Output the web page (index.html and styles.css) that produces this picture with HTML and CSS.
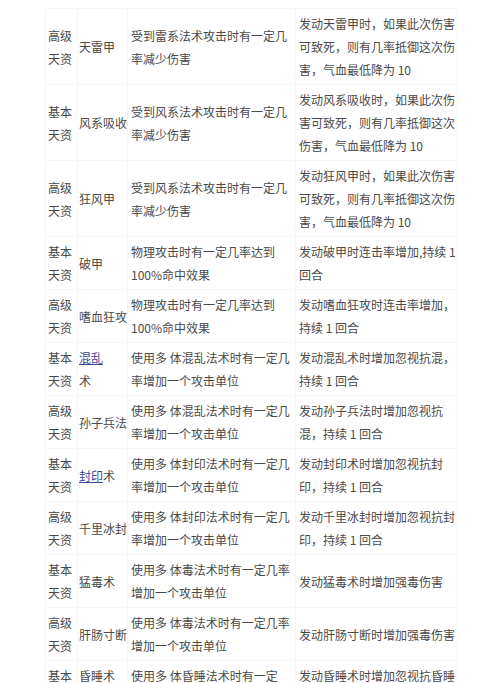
FILE: index.html
```html
<!DOCTYPE html>
<html lang="zh-CN">
<head>
<meta charset="utf-8">
<title>天资</title>
<link rel="stylesheet" href="styles.css">
</head>
<body>
<div class="page">
  <table class="talents">
    <colgroup>
      <col class="c-kind">
      <col class="c-name">
      <col class="c-desc">
      <col class="c-effect">
    </colgroup>
    <tbody>
      <tr>
        <td class="kind">高级<br>天资</td>
        <td class="name">天雷甲</td>
        <td class="desc">受到雷系法术攻击时有一定几<br>率减少伤害</td>
        <td class="effect">发动天雷甲时，如果此次伤害<br>可致死，则有几率抵御这次伤<br>害，气血最低降为 10</td>
      </tr>
      <tr>
        <td class="kind">基本<br>天资</td>
        <td class="name">风系吸收</td>
        <td class="desc">受到风系法术攻击时有一定几<br>率减少伤害</td>
        <td class="effect">发动风系吸收时，如果此次伤<br>害可致死，则有几率抵御这次<br>伤害，气血最低降为 10</td>
      </tr>
      <tr>
        <td class="kind">高级<br>天资</td>
        <td class="name">狂风甲</td>
        <td class="desc">受到风系法术攻击时有一定几<br>率减少伤害</td>
        <td class="effect">发动狂风甲时，如果此次伤害<br>可致死，则有几率抵御这次伤<br>害，气血最低降为 10</td>
      </tr>
      <tr>
        <td class="kind">基本<br>天资</td>
        <td class="name">破甲</td>
        <td class="desc">物理攻击时有一定几率达到<br>100%命中效果</td>
        <td class="effect">发动破甲时连击率增加,持续 1<br>回合</td>
      </tr>
      <tr>
        <td class="kind">高级<br>天资</td>
        <td class="name">嗜血狂攻</td>
        <td class="desc">物理攻击时有一定几率达到<br>100%命中效果</td>
        <td class="effect">发动嗜血狂攻时连击率增加，<br>持续 1 回合</td>
      </tr>
      <tr>
        <td class="kind">基本<br>天资</td>
        <td class="name"><a href="#">混乱</a><br>术</td>
        <td class="desc">使用多 体混乱法术时有一定几<br>率增加一个攻击单位</td>
        <td class="effect">发动混乱术时增加忽视抗混，<br>持续 1 回合</td>
      </tr>
      <tr>
        <td class="kind">高级<br>天资</td>
        <td class="name">孙子兵法</td>
        <td class="desc">使用多 体混乱法术时有一定几<br>率增加一个攻击单位</td>
        <td class="effect">发动孙子兵法时增加忽视抗<br>混，持续 1 回合</td>
      </tr>
      <tr>
        <td class="kind">基本<br>天资</td>
        <td class="name"><a href="#">封印</a>术</td>
        <td class="desc">使用多 体封印法术时有一定几<br>率增加一个攻击单位</td>
        <td class="effect">发动封印术时增加忽视抗封<br>印，持续 1 回合</td>
      </tr>
      <tr>
        <td class="kind">高级<br>天资</td>
        <td class="name">千里冰封</td>
        <td class="desc">使用多 体封印法术时有一定几<br>率增加一个攻击单位</td>
        <td class="effect">发动千里冰封时增加忽视抗封<br>印，持续 1 回合</td>
      </tr>
      <tr>
        <td class="kind">基本<br>天资</td>
        <td class="name">猛毒术</td>
        <td class="desc">使用多 体毒法术时有一定几率<br>增加一个攻击单位</td>
        <td class="effect">发动猛毒术时增加强毒伤害</td>
      </tr>
      <tr>
        <td class="kind">高级<br>天资</td>
        <td class="name">肝肠寸断</td>
        <td class="desc">使用多 体毒法术时有一定几率<br>增加一个攻击单位</td>
        <td class="effect">发动肝肠寸断时增加强毒伤害</td>
      </tr>
      <tr>
        <td class="kind">基本<br>天资</td>
        <td class="name">昏睡术<br>&nbsp;</td>
        <td class="desc">使用多 体昏睡法术时有一定<br>几率增加一个攻击单位</td>
        <td class="effect">发动昏睡术时增加忽视抗昏睡<br>，持续 1 回合</td>
      </tr>
    </tbody>
  </table>
</div>
</body>
</html>
```

FILE: styles.css
```css
html, body {
  margin: 0;
  background: #ffffff;
}

body {
  font-family: "Noto Sans CJK SC", "Noto Sans", sans-serif;
  font-size: 12px;
  color: #4a4a4a;
}

.page {
  padding: 8px 0 0 45px;
}

.talents {
  border-collapse: collapse;
  table-layout: fixed;
  width: 412px;
}

.c-kind { width: 32px; }
.c-name { width: 50px; }
.c-desc { width: 168px; }
.c-effect { width: 162px; }

.talents td {
  border: 1px solid #f6f6f6;
  padding: 3px 2px;
  line-height: 23px;
  vertical-align: middle;
  white-space: nowrap;
  overflow: hidden;
}

.talents td.kind { padding-left: 2px; }
.talents td.name { padding-left: 1px; padding-right: 0; }
.talents td.desc { padding-left: 3px; }
.talents td.effect { padding-left: 3px; }

.talents a {
  color: #3a47a0;
  text-decoration: underline;
}
```
